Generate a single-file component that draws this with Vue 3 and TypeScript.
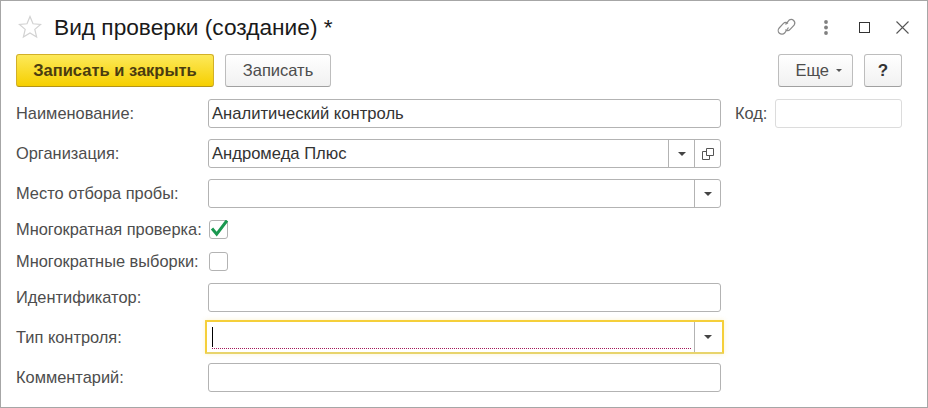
<script setup lang="ts">
const caret = 'M0 0h8l-4 4z'
</script>

<template>
  <div class="window">
    <header class="head">
      <svg class="star" width="24" height="24" viewBox="0 0 24 24"><path d="M12 1.5l3 7.3 7.6.6-5.8 5 1.8 7.5-6.6-4-6.6 4 1.8-7.5-5.8-5 7.6-.6z" fill="#fff" stroke="#d2d2d2" stroke-width="1.2"/></svg>
      <h1 class="title">Вид проверки (создание) *</h1>
      <div class="win-icons">
        <svg class="link" width="20" height="20" viewBox="0 0 20 20" fill="none" stroke="#8a8a8a" stroke-width="1.2"><path d="M8.5 7.5l3.6-4.4a3.6 3.6 0 0 1 5 5l-4 4.3a3.4 3.4 0 0 1-4.8.2"/><path d="M11.5 10.5L7.6 16a3.6 3.6 0 0 1-5.4-5l4-4.4a3.4 3.4 0 0 1 4.8-.1"/></svg>
        <svg class="dots" width="6" height="15" viewBox="0 0 6 15" fill="#808080"><circle cx="3" cy="2" r="1.9"/><circle cx="3" cy="7.5" r="1.9"/><circle cx="3" cy="13" r="1.9"/></svg>
        <span class="maxbox"></span>
        <svg class="close" width="13" height="13" viewBox="0 0 13 13" stroke="#555" stroke-width="1.1"><path d="M.5.5l12 12M12.5.5l-12 12"/></svg>
      </div>
    </header>

    <div class="toolbar">
      <button class="btn primary">Записать и закрыть</button>
      <button class="btn save">Записать</button>
      <div class="spacer"></div>
      <button class="btn more">Еще<svg class="more-caret" width="6" height="3" viewBox="0 0 8 4"><path :d="caret" fill="#555"/></svg></button>
      <button class="btn help">?</button>
    </div>

    <div class="form">
      <div class="row">
        <label class="lbl">Наименование:</label>
        <div class="field"><span class="val">Аналитический контроль</span></div>
        <label class="code-lbl">Код:</label>
        <div class="field code"></div>
      </div>
      <div class="row">
        <label class="lbl">Организация:</label>
        <div class="field">
          <span class="val">Андромеда Плюс</span>
          <span class="cell"><svg width="8" height="4" viewBox="0 0 8 4"><path :d="caret" fill="#444"/></svg></span>
          <span class="cell"><svg width="12" height="12" viewBox="0 0 12 12" fill="none" stroke="#555"><path d="M4.5.5h7v7h-7z"/><path d="M4.5 3.5h-4v8h7v-4"/></svg></span>
        </div>
      </div>
      <div class="row">
        <label class="lbl">Место отбора пробы:</label>
        <div class="field">
          <span class="val"></span>
          <span class="cell"><svg width="8" height="4" viewBox="0 0 8 4"><path :d="caret" fill="#444"/></svg></span>
        </div>
      </div>
      <div class="row check-row">
        <label class="lbl">Многократная проверка:</label>
        <span class="box">
          <svg class="tick" width="20" height="19" viewBox="0 0 20 19"><path d="M3 8.5l4.7 5.7L18 .5" fill="none" stroke="#1a9850" stroke-width="3"/></svg>
        </span>
      </div>
      <div class="row check-row">
        <label class="lbl">Многократные выборки:</label>
        <span class="box"></span>
      </div>
      <div class="row">
        <label class="lbl">Идентификатор:</label>
        <div class="field"></div>
      </div>
      <div class="row">
        <label class="lbl">Тип контроля:</label>
        <div class="field focus">
          <span class="val required"><i class="cursor"></i></span>
          <span class="cell"><svg width="8" height="4" viewBox="0 0 8 4"><path :d="caret" fill="#444"/></svg></span>
        </div>
      </div>
      <div class="row">
        <label class="lbl">Комментарий:</label>
        <div class="field"></div>
      </div>
    </div>
  </div>
</template>

<style scoped>
.window {
  box-sizing: border-box;
  width: 928px;
  height: 408px;
  border: 1px solid #a6a6a6;
  background: #fff;
  font-family: "Liberation Sans", Arial, sans-serif;
  font-size: 16.4px;
  color: #4d4d4d;
  overflow: hidden;
}
.head {
  display: flex;
  align-items: center;
  height: 53px;
  padding: 0 18px 0 17px;
}
.star { flex: none; margin-right: 12px; margin-top: -1px; }
.title {
  margin: 0;
  font-size: 22.7px;
  font-weight: 400;
  color: #1a1a1a;
  flex: 1;
}
.win-icons { display: flex; align-items: center; }
.link { margin-right: 26px; margin-top: -1px; }
.dots { margin-right: 30px; margin-top: -1px; }
.maxbox { box-sizing: border-box; width: 11px; height: 11px; border: 1px solid #333; margin-right: 26px; }
.toolbar {
  display: flex;
  align-items: stretch;
  height: 33px;
  padding: 0 25px 0 15px;
  gap: 11px;
}
.spacer { flex: 1; }
.btn {
  box-sizing: border-box;
  font: inherit;
  font-size: 16.5px;
  color: #4d4d4d;
  border: 1px solid #bdbdbd;
  border-bottom-color: #a0a0a0;
  border-radius: 3px;
  background: linear-gradient(#ffffff, #f1f1f1);
  padding: 0;
}
.primary {
  width: 198px;
  font-weight: 700;
  color: #4a3c10;
  border-color: #d2b028;
  border-bottom-color: #b39418;
  background: linear-gradient(#fde95a, #f6cf00);
}
.save { width: 106px; }
.more { width: 75px; display: flex; align-items: center; justify-content: flex-end; padding-right: 10px; }
.more-caret { margin-left: 7px; }
.help { width: 38px; font-weight: 700; color: #333; font-size: 17px; }
.form {
  display: flex;
  flex-direction: column;
  gap: 11px;
  padding: 12px 0 0 15px;
}
.row { display: flex; align-items: center; height: 29px; }
.check-row { height: 21px; }
.lbl { width: 192px; flex: none; white-space: nowrap; }
.field {
  box-sizing: border-box;
  display: flex;
  width: 513px;
  height: 29px;
  border: 1px solid #b3b3b3;
  border-radius: 3px;
  background: #fff;
  color: #333;
  font-size: 16.6px;
}
.val { flex: 1; padding-left: 3px; line-height: 27px; position: relative; }
.cell {
  box-sizing: border-box;
  flex: none;
  width: 26px;
  border-left: 1px solid #b3b3b3;
  display: flex;
  align-items: center;
  justify-content: center;
}
.code-lbl { margin-left: 14px; width: 40px; flex: none; }
.code { width: 127px; border-color: #dcdcdc; }
.box {
  box-sizing: border-box;
  position: relative;
  width: 19px;
  height: 19px;
  flex: none;
  margin-left: 1px;
  border: 1px solid #b3b3b3;
  border-radius: 3px;
}
.tick { position: absolute; left: -1px; top: -1px; }
.focus {
  width: 519px;
  height: 34px;
  margin: -3px 0 0 -3px;
  align-self: flex-start;
  border: 2px solid #f5cf3a;
  border-bottom-color: #e8d46c;
  border-radius: 1px;
  box-shadow: 0 0 4px rgba(245, 207, 58, 0.25);
}
.focus .cell { width: 28px; padding-right: 2px; }
.required { margin: 0 3px 0 5px; padding-left: 0; }
.required::after {
  content: "";
  position: absolute;
  left: 0;
  right: 0;
  top: 26px;
  height: 1px;
  background: repeating-linear-gradient(90deg, #a3195b 0 1px, #fff 1px 2px);
}
.cursor { position: absolute; left: 0; top: 5px; width: 1px; height: 20px; background: #000; }
</style>
